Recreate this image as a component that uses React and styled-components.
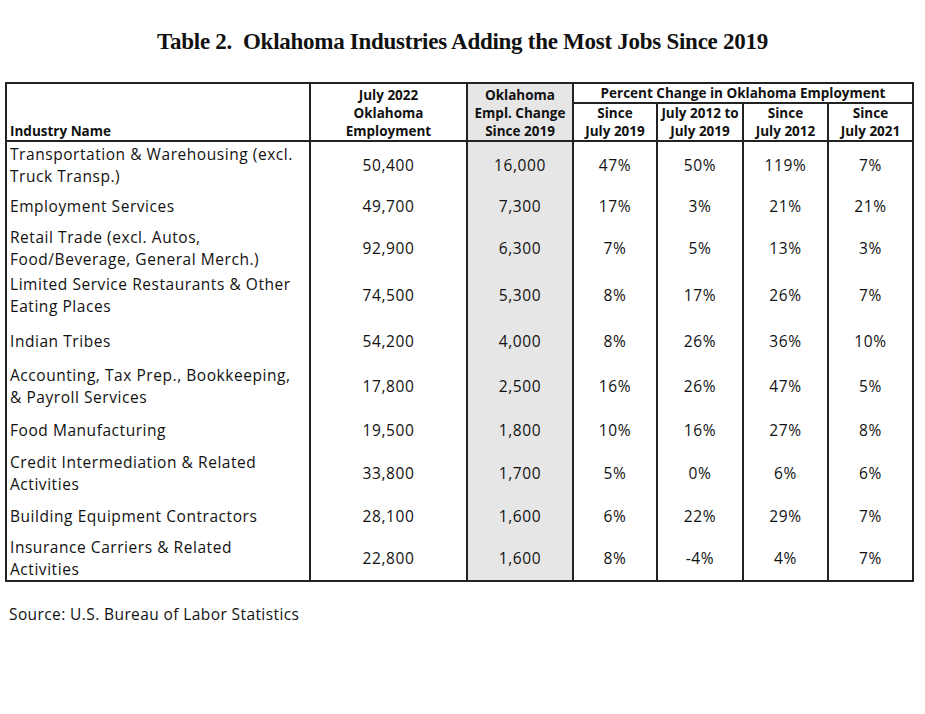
import React from "react";
import styled, { createGlobalStyle } from "styled-components";

const Global = createGlobalStyle`
  html, body { margin: 0; padding: 0; background: #fff; }
  body { font-family: "Open Sans", "Noto Sans", sans-serif; color: #111; }
`;

const Page = styled.div`
  width: 925px;
  height: 714px;
  padding: 30px 0 0 5px;
  box-sizing: border-box;
`;

const Title = styled.h1`
  margin: 0 0 28px 0;
  width: 915px;
  text-align: center;
  font-family: "Liberation Serif", "DejaVu Serif", serif;
  font-weight: bold;
  font-size: 23px;
  line-height: 24px;
  letter-spacing: -0.27px;
  color: #111;
`;

const Table = styled.table`
  width: 907px;
  table-layout: fixed;
  border-collapse: collapse;
  border: 2px solid #222;
`;

const HeadCell = styled.th`
  font-weight: bold;
  font-size: 13.5px;
  line-height: 18px;
  text-align: ${(p) => (p.$left ? "left" : "center")};
  vertical-align: bottom;
  padding: 0 ${(p) => (p.$left ? "3px" : "1px")};
  border-left: 2px solid #222;
  border-right: 2px solid #222;
  border-bottom: ${(p) => (p.$under ? "2px solid #222" : "none")};
  background: ${(p) => (p.$shade ? "#e6e6e6" : "#fff")};
  white-space: nowrap;
  color: #111;
`;

const HeadRow = styled.tr`
  height: ${(p) => p.$h}px;
  border-bottom: ${(p) => (p.$last ? "2px solid #222" : "none")};
`;

const Row = styled.tr`
  height: ${(p) => p.$h}px;
`;

const NameCell = styled.td`
  font-size: 15.5px;
  line-height: 22px;
  letter-spacing: 0.55px;
  text-align: left;
  vertical-align: middle;
  padding: 0 3px;
  border-left: 2px solid #222;
  border-right: 2px solid #222;
  white-space: pre-line;
`;

const NumCell = styled.td`
  font-size: 15.5px;
  line-height: 22px;
  letter-spacing: 0.6px;
  text-align: center;
  vertical-align: middle;
  padding: 0;
  border-left: 2px solid #222;
  border-right: 2px solid #222;
  background: ${(p) => (p.$shade ? "#e6e6e6" : "#fff")};
`;

const Source = styled.p`
  margin: 21px 0 0 4px;
  font-size: 15.5px;
  line-height: 22px;
  letter-spacing: 0.4px;
`;

const widths = [304, 157, 106, 84, 86, 85, 85];

const rows = [
  ["Transportation & Warehousing (excl.\nTruck Transp.)", "50,400", "16,000", "47%", "50%", "119%", "7%", 46],
  ["Employment Services", "49,700", "7,300", "17%", "3%", "21%", "21%", 38],
  ["Retail Trade (excl. Autos,\nFood/Beverage, General Merch.)", "92,900", "6,300", "7%", "5%", "13%", "3%", 46],
  ["Limited Service Restaurants & Other\nEating Places", "74,500", "5,300", "8%", "17%", "26%", "7%", 48],
  ["Indian Tribes", "54,200", "4,000", "8%", "26%", "36%", "10%", 44],
  ["Accounting, Tax Prep., Bookkeeping,\n& Payroll Services", "17,800", "2,500", "16%", "26%", "47%", "5%", 46],
  ["Food Manufacturing", "19,500", "1,800", "10%", "16%", "27%", "8%", 41],
  ["Credit Intermediation & Related\nActivities", "33,800", "1,700", "5%", "0%", "6%", "6%", 45],
  ["Building Equipment Contractors", "28,100", "1,600", "6%", "22%", "29%", "7%", 41],
  ["Insurance Carriers & Related\nActivities", "22,800", "1,600", "8%", "-4%", "4%", "7%", 45],
];

export default function App() {
  return (
    <Page>
      <Global />
      <Title>Table 2.&nbsp; Oklahoma Industries Adding the Most Jobs Since 2019</Title>
      <Table>
        <colgroup>
          {widths.map((w, i) => (
            <col key={i} style={{ width: w }} />
          ))}
        </colgroup>
        <thead>
          <HeadRow $h={18}>
            <HeadCell rowSpan={2} $left>Industry Name</HeadCell>
            <HeadCell rowSpan={2}>
              July 2022<br />Oklahoma<br />Employment
            </HeadCell>
            <HeadCell rowSpan={2} $shade>
              Oklahoma<br />Empl. Change<br />Since 2019
            </HeadCell>
            <HeadCell colSpan={4} $under>Percent Change in Oklahoma Employment</HeadCell>
          </HeadRow>
          <HeadRow $h={36} $last>
            <HeadCell>Since<br />July 2019</HeadCell>
            <HeadCell>July 2012 to<br />July 2019</HeadCell>
            <HeadCell>Since<br />July 2012</HeadCell>
            <HeadCell>Since<br />July 2021</HeadCell>
          </HeadRow>
        </thead>
        <tbody>
          {rows.map((r, i) => (
            <Row key={i} $h={r[7]}>
              <NameCell>{r[0]}</NameCell>
              <NumCell>{r[1]}</NumCell>
              <NumCell $shade>{r[2]}</NumCell>
              <NumCell>{r[3]}</NumCell>
              <NumCell>{r[4]}</NumCell>
              <NumCell>{r[5]}</NumCell>
              <NumCell>{r[6]}</NumCell>
            </Row>
          ))}
        </tbody>
      </Table>
      <Source>Source: U.S. Bureau of Labor Statistics</Source>
    </Page>
  );
}
